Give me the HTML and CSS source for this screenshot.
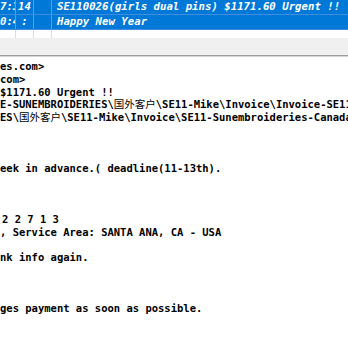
FILE: index.html
```html
<!DOCTYPE html>
<html>
<head>
<meta charset="utf-8">
<link rel="stylesheet" href="styles.css">
</head>
<body>
<div class="list">
  <div class="row sel">
    <div class="c c1">7:3</div><div class="c c2">14</div><div class="c c3"></div><div class="c subj">SE110026(girls dual pins) $1171.60 Urgent !!</div>
  </div>
  <div class="row sel">
    <div class="c c1">0:4</div><div class="c c2">:</div><div class="c c3"></div><div class="c subj">Happy New Year</div>
  </div>
  <div class="row blank">
    <div class="c c1"></div><div class="c c2"></div><div class="c c3"></div><div class="c subj"></div>
  </div>
</div>
<div class="pane"></div>
<div class="body">
<div class="ln">es.com&gt;</div>
<div class="ln">com&gt;</div>
<div class="ln">$1171.60 Urgent !!</div>
<div class="ln">E-SUNEMBROIDERIES\<span class="cjk">国外客户</span>\SE11-Mike\Invoice\Invoice-SE11-Sunembroideries</div>
<div class="ln">ES\<span class="cjk">国外客户</span>\SE11-Mike\Invoice\SE11-Sunembroideries-Canada</div>
<div class="ln"></div>
<div class="ln"></div>
<div class="ln"></div>
<div class="ln">eek in advance.( deadline(11-13th).</div>
<div class="ln"></div>
<div class="ln"></div>
<div class="ln"></div>
<div class="ln nudge">2 2 7 1 3</div>
<div class="ln">, Service Area: SANTA ANA, CA - USA</div>
<div class="ln"></div>
<div class="ln">nk info again.</div>
<div class="ln"></div>
<div class="ln"></div>
<div class="ln"></div>
<div class="ln">ges payment as soon as possible.</div>
<div class="ln"></div>
<div class="ln"></div>
</div>
</body>
</html>
```
FILE: styles.css
```css
html, body {
  margin: 0;
  padding: 0;
  background: #ffffff;
  width: 348px;
  height: 348px;
  overflow: hidden;
}
.list {
  font-family: "DejaVu Sans Mono", "Liberation Mono", monospace;
  font-size: 10.7px;
  font-weight: bold;
  font-style: italic;
}
.row {
  display: flex;
  height: 14px;
  border-bottom: 1px solid #3d8fde;
  white-space: nowrap;
  overflow: hidden;
}
.row.sel {
  background: #0078d7;
  color: #ffffff;
}
.row.blank {
  height: 8px;
  border-bottom: none;
  background: #ffffff;
}
.c {
  height: 100%;
  overflow: hidden;
  line-height: 14px;
  border-right: 1px solid #5b9fe2;
  box-sizing: border-box;
}
.row.blank .c {
  border-right-color: #dcdcdc;
}
.c1 { width: 16px; text-align: right; padding-right: 1px; }
.c2 { width: 18px; text-align: center; }
.c3 { width: 18px; }
.subj { flex: 1; padding-left: 5px; border-right: none; }
.pane {
  height: 17px;
  background: #f0f0f0;
  border-bottom: 1px solid #9c9c9c;
  box-shadow: 0 1px 0 #d6d6d6;
}
.body {
  padding-top: 3px;
  margin-top: 1px;
  font-family: "DejaVu Sans Mono", "Liberation Mono", monospace;
  font-size: 10.5px;
  font-weight: bold;
  color: #000000;
  line-height: 12.75px;
}
.ln {
  height: 12.75px;
  white-space: pre;
}
.nudge {
  padding-left: 2px;
}
.cjk {
  font-family: "Noto Sans CJK SC", sans-serif;
  font-weight: normal;
}
```
